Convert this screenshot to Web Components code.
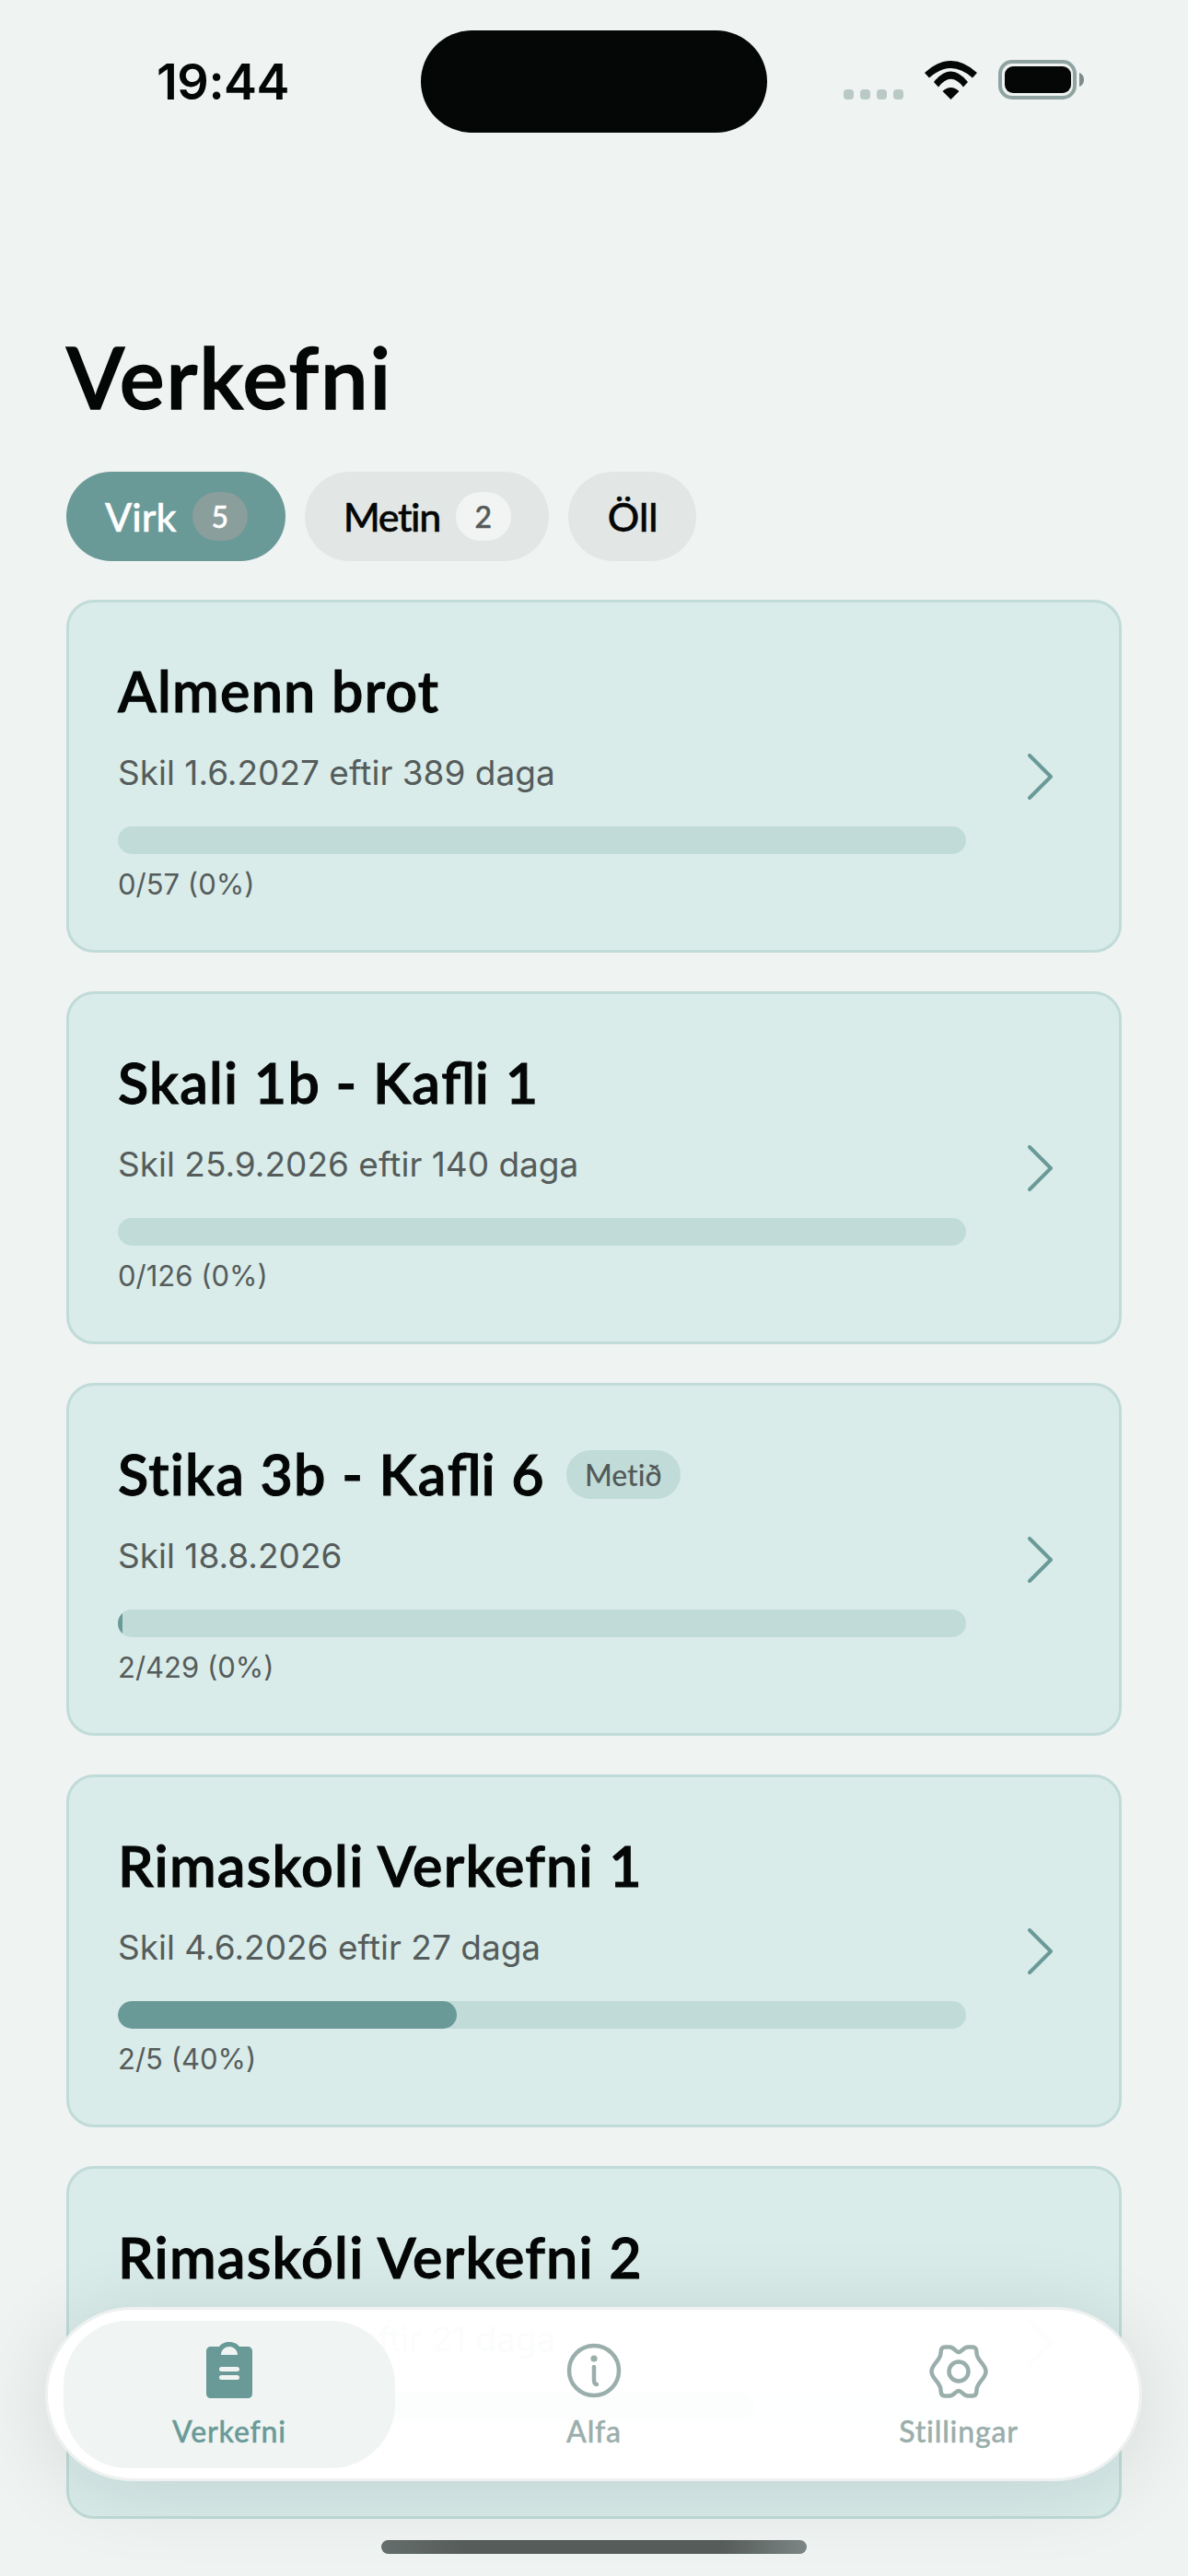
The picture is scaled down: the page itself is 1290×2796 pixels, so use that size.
<!DOCTYPE html>
<html lang="is">
<head>
<meta charset="utf-8">
<title>Verkefni</title>
<style>
  html, body { margin: 0; padding: 0; }
  body {
    width: 1290px;
    height: 2796px;
    overflow: hidden;
    background: #eff3f2;
    color: #040706;
    font-family: "Inter", "Liberation Sans", sans-serif;
  }
</style>
</head>
<body>
  <app-screen>
    <status-bar time="19:44"></status-bar>
    <page-title>Verkefni</page-title>
    <filter-row>
      <filter-pill count="5" active>Virk</filter-pill>
      <filter-pill count="2" style="letter-spacing:-1.400px">Metin</filter-pill>
      <filter-pill style="padding:0 42px 0 43px">Öll</filter-pill>
    </filter-row>
    <task-list>
      <task-card heading="Almenn brot" due="Skil 1.6.2027 eftir 389 daga" progress="0" label="0/57 (0%)"></task-card>
      <task-card heading="Skali 1b - Kafli 1" due="Skil 25.9.2026 eftir 140 daga" progress="0" label="0/126 (0%)"></task-card>
      <task-card heading="Stika 3b - Kafli 6" due="Skil 18.8.2026" progress="0.5" label="2/429 (0%)" badge="Metið"></task-card>
      <task-card heading="Rimaskoli Verkefni 1" due="Skil 4.6.2026 eftir 27 daga" progress="40" label="2/5 (40%)"></task-card>
      <task-card heading="Rimaskóli Verkefni 2" due="Skil 29.5.2026 eftir 21 daga" progress="75" label=""></task-card>
    </task-list>
    <tab-bar>
      <tab-item active>
        <svg slot="icon" width="50" height="61" viewBox="0 0 50 61">
          <path fill="currentColor" fill-rule="evenodd" d="M5 5h9C16 2 20 0 25 0s9 2 11 5h9c3 0 5 2 5 5v46c0 3-2 5-5 5H5c-3 0-5-2-5-5V10c0-3 2-5 5-5ZM16 14h18c0-5-4-9-9-9s-9 4-9 9Z"/>
          <rect x="14" y="27" width="22" height="5" rx="2.5" fill="#f0f4f3"/>
          <rect x="14" y="36" width="22" height="5" rx="2.5" fill="#f0f4f3"/>
        </svg>
        Verkefni
      </tab-item>
      <tab-item>
        <svg slot="icon" width="60" height="61" viewBox="0 0 60 61" fill="none" stroke="currentColor">
          <circle cx="30" cy="31" r="27" stroke-width="4.5"/>
          <circle cx="30" cy="18" r="3.6" fill="currentColor" stroke="none"/>
          <path d="M30 27v14c0 3 1 5 3 5" stroke-width="4.5" stroke-linecap="round"/>
        </svg>
        Alfa
      </tab-item>
      <tab-item>
        <svg slot="icon" width="64" height="61" viewBox="0 -3 64 61" fill="none" stroke="currentColor" stroke-width="4.5" stroke-linejoin="round">
          <path d="M32 8C29 8 27 2.500 22 2.500L17 2.500C13.500 2.500 12.500 5 12.500 9C12.500 14 9 17 6 21C3 25 2.500 27 2.500 29C2.500 31 3 33 6 37C9 41 12.500 44 12.500 49C12.500 53 13.500 55.500 17 55.500L22 55.500C27 55.500 29 50 32 50C35 50 37 55.500 42 55.500L47 55.500C50.500 55.500 51.500 53 51.500 49C51.500 44 55 41 58 37C61 33 61.500 31 61.500 29C61.500 27 61 25 58 21C55 17 51.500 14 51.500 9C51.500 5 50.500 2.500 47 2.500L42 2.500C37 2.500 35 8 32 8Z"/>
          <circle cx="32" cy="29" r="10.500"/>
        </svg>
        Stillingar
      </tab-item>
    </tab-bar>
    <home-indicator></home-indicator>
  </app-screen>

<script>
class AppScreen extends HTMLElement {
  constructor () {
    super()
    this.attachShadow({ mode: 'open' })
  }

  connectedCallback () {
    this.shadowRoot.innerHTML = /*html*/`
      <style>
        :host {
          display: block;
          position: relative;
          width: 1290px;
          height: 2796px;
          overflow: hidden;
        }
      </style>
      <slot></slot>
    `
  }
}

class StatusBar extends HTMLElement {
  constructor () {
    super()
    this.attachShadow({ mode: 'open' })
  }

  connectedCallback () {
    this.shadowRoot.innerHTML = /*html*/`
      <style>
        :host {
          display: grid;
          grid-template-columns: 457px 376px 1fr;
          padding-top: 33px;
          height: 111px;
        }
        .time {
          padding-left: 170px;
          align-self: center;
          font: 600 54px/60px "Inter", "Liberation Sans", sans-serif;
          letter-spacing: -0.5px;
        }
        .island {
          background: #040706;
          border-radius: 56px;
        }
        .icons {
          display: flex;
          align-items: flex-end;
          padding: 0 0 36px 83px;
        }
        .dots {
          display: flex;
          gap: 7px;
        }
        .dots i {
          width: 11px;
          height: 11px;
          border-radius: 4px;
          background: #b9c9c6;
        }
        .wifi { margin-left: 23px; }
        .battery { margin-left: 23px; }
      </style>
      <div class="time">${this.getAttribute('time')}</div>
      <div class="island"></div>
      <div class="icons">
        <div class="dots"><i></i><i></i><i></i><i></i></div>
        <svg class="wifi" width="57" height="42" viewBox="0 0 57 42">
          <path fill="#040706" d="M0 13Q28.500-13 57 13L52 18.500Q28.500-2.500 5 18.500ZM10 23Q28.500 0 47 23L42 28.500Q28.500 11 15 28.500ZM19.500 33Q28.500 25 37.500 33L28.500 42Z"/>
        </svg>
        <svg class="battery" width="93" height="43" viewBox="0 0 93 43">
          <rect x="2" y="2" width="81" height="39" rx="13" fill="none" stroke="#8fa3a0" stroke-width="4"/>
          <rect x="7" y="7" width="72" height="29" rx="9" fill="#040706"/>
          <path d="M88 14c3 1 5 4 5 7.500s-2 6.500-5 7.500Z" fill="#7f8b88"/>
        </svg>
      </div>
    `
  }
}

class PageTitle extends HTMLElement {
  constructor () {
    super()
    this.attachShadow({ mode: 'open' })
  }

  connectedCallback () {
    this.shadowRoot.innerHTML = /*html*/`
      <style>
        :host {
          display: block;
          margin: 215px 72px 0;
          font: 600 92px/100px "Lato", "Liberation Sans", sans-serif;
          letter-spacing: 1.800px;
          font-variant-ligatures: none;
          -webkit-text-stroke: 1.400px currentColor;
        }
      </style>
      <slot></slot>
    `
  }
}

class FilterRow extends HTMLElement {
  constructor () {
    super()
    this.attachShadow({ mode: 'open' })
  }

  connectedCallback () {
    this.shadowRoot.innerHTML = /*html*/`
      <style>
        :host {
          display: flex;
          gap: 21px;
          margin: 53px 72px 0;
        }
      </style>
      <slot></slot>
    `
  }
}

class FilterPill extends HTMLElement {
  constructor () {
    super()
    this.attachShadow({ mode: 'open' })
  }

  connectedCallback () {
    const count = this.getAttribute('count')
    this.shadowRoot.innerHTML = /*html*/`
      <style>
        :host {
          display: flex;
          align-items: center;
          gap: 17px;
          height: 97px;
          padding: 0 41px 0 42px;
          border-radius: 49px;
          background: #e2e6e5;
          color: #040706;
          font: 500 43px/60px "Lato", "Liberation Sans", sans-serif;
          font-variant-ligatures: none;
          -webkit-text-stroke: 0.5px currentColor;
        }
        :host([active]) {
          background: #6a9a98;
          color: #fff;
        }
        .count {
          display: flex;
          align-items: center;
          justify-content: center;
          width: 60px;
          height: 53px;
          border-radius: 27px;
          background: #f1f4f3;
          color: #555b5a;
          font: 500 32px/53px "Lato", "Liberation Sans", sans-serif;
          letter-spacing: 0;
        }
        :host([active]) .count {
          background: #8a9e9c;
          color: #fff;
        }
      </style>
      <slot></slot>
      ${count ? `<span class="count">${count}</span>` : ''}
    `
  }
}

class TaskList extends HTMLElement {
  constructor () {
    super()
    this.attachShadow({ mode: 'open' })
  }

  connectedCallback () {
    this.shadowRoot.innerHTML = /*html*/`
      <style>
        :host {
          display: flex;
          flex-direction: column;
          gap: 42px;
          margin: 42px 72px 0;
        }
      </style>
      <slot></slot>
    `
  }
}

class TaskCard extends HTMLElement {
  constructor () {
    super()
    this.attachShadow({ mode: 'open' })
  }

  connectedCallback () {
    const badge = this.getAttribute('badge')
    const heading = this.getAttribute('heading').replace('fl', '<span class="lig">fl</span>')
    this.shadowRoot.innerHTML = /*html*/`
      <style>
        :host {
          display: flex;
          align-items: center;
          justify-content: space-between;
          box-sizing: border-box;
          height: 383px;
          padding: 0 72px 0 53px;
          border: 3px solid #c0dbd8;
          border-radius: 30px;
          background: #d9ecea;
        }
        .body { width: 921px; padding-top: 10px; }
        .head {
          display: flex;
          align-items: center;
          gap: 23px;
          height: 70px;
        }
        h2 {
          margin: 0;
          font: 600 61px/70px "Lato", "Liberation Sans", sans-serif;
          letter-spacing: 1.250px;
          font-variant-ligatures: none;
          -webkit-text-stroke: 1px currentColor;
          color: #040706;
        }
        .lig { font-variant-ligatures: common-ligatures; letter-spacing: 0; }
        .badge {
          padding: 0 20px;
          height: 53px;
          border-radius: 27px;
          background: #c0dbd8;
          color: #525a59;
          font: 500 32px/53px "Lato", "Liberation Sans", sans-serif;
          font-variant-ligatures: none;
        }
        .due {
          margin-top: 31px;
          color: #555c5b;
          font: 400 37px/46px "Inter", "Liberation Sans", sans-serif;
        }
        .track {
          height: 30px;
          margin-top: 35px;
          border-radius: 15px;
          background: #c0dbd8;
          overflow: hidden;
        }
        .fill {
          height: 100%;
          background: #6a9a98;
          border-radius: 15px;
        }
        .label {
          height: 40px;
          margin-top: 13px;
          color: #555c5b;
          font: 400 31px/40px "Inter", "Liberation Sans", sans-serif;
        }
        svg { flex: none; }
      </style>
      <div class="body">
        <div class="head">
          <h2>${heading}</h2>
          ${badge ? `<span class="badge">${badge}</span>` : ''}
        </div>
        <div class="due">${this.getAttribute('due')}</div>
        <div class="track"><div class="fill" style="width:${this.getAttribute('progress')}%"></div></div>
        <div class="label">${this.getAttribute('label')}</div>
      </div>
      <svg width="27" height="50" viewBox="0 0 27 50" fill="none" stroke="#6a9a98" stroke-width="4" stroke-linecap="round" stroke-linejoin="round">
        <path d="M2 2l23 23L2 48"/>
      </svg>
    `
  }
}

class TabBar extends HTMLElement {
  constructor () {
    super()
    this.attachShadow({ mode: 'open' })
  }

  connectedCallback () {
    this.shadowRoot.innerHTML = /*html*/`
      <style>
        :host {
          position: absolute;
          left: 49px;
          top: 2504px;
          box-sizing: border-box;
          width: 1191px;
          height: 189px;
          padding: 12px 16px 0 17px;
          display: flex;
          gap: 36px;
          border: 3px solid #eef1f0;
          border-radius: 95px;
          background: rgba(255, 255, 255, 0.98);
          box-shadow: 0 10px 90px rgba(0, 0, 0, 0.11);
        }
      </style>
      <slot></slot>
    `
  }
}

class TabItem extends HTMLElement {
  constructor () {
    super()
    this.attachShadow({ mode: 'open' })
  }

  connectedCallback () {
    this.shadowRoot.innerHTML = /*html*/`
      <style>
        :host {
          display: flex;
          flex-direction: column;
          align-items: center;
          box-sizing: border-box;
          width: 360px;
          height: 160px;
          padding-top: 23px;
          border-radius: 70px;
          color: #9aaeac;
          font: 500 32px/40px "Lato", "Liberation Sans", sans-serif;
          letter-spacing: 0.8px;
          font-variant-ligatures: none;
          -webkit-text-stroke: 0.4px currentColor;
        }
        :host([active]) {
          background: #f0f4f3;
          color: #6a9a98;
        }
        .icon { height: 61px; margin-bottom: 16px; }
      </style>
      <div class="icon"><slot name="icon"></slot></div>
      <slot></slot>
    `
  }
}

class HomeIndicator extends HTMLElement {
  constructor () {
    super()
    this.attachShadow({ mode: 'open' })
  }

  connectedCallback () {
    this.shadowRoot.innerHTML = /*html*/`
      <style>
        :host {
          position: absolute;
          left: 414px;
          top: 2757px;
          width: 462px;
          height: 15px;
          border-radius: 8px;
          background: linear-gradient(90deg, #656e6c, #555c5a 20%, #555c5a 80%, #7c8684);
        }
      </style>
    `
  }
}

customElements.define('app-screen', AppScreen)
customElements.define('status-bar', StatusBar)
customElements.define('page-title', PageTitle)
customElements.define('filter-row', FilterRow)
customElements.define('filter-pill', FilterPill)
customElements.define('task-list', TaskList)
customElements.define('task-card', TaskCard)
customElements.define('tab-bar', TabBar)
customElements.define('tab-item', TabItem)
customElements.define('home-indicator', HomeIndicator)
</script>
</body>
</html>
